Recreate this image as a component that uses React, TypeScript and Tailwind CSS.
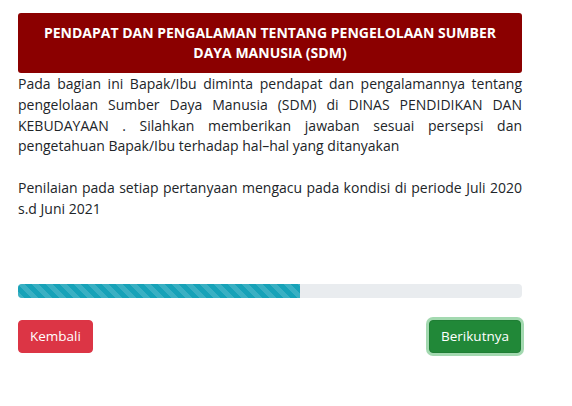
export default function App() {
  const progress = 56;
  return (
    <div className="min-h-[406px] w-[572px] bg-white font-['Open_Sans',sans-serif] text-[#212529]">
      <div className="ml-[18px] w-[504px] pt-[13px]">
        {/* Title */}
        <div className="rounded-[3px] bg-[#8b0000] px-4 py-[10px] text-center text-[14px] font-bold leading-[20px] text-white">
          PENDAPAT DAN PENGALAMAN TENTANG PENGELOLAAN SUMBER DAYA MANUSIA (SDM)
        </div>

        {/* Intro */}
        <p className="mt-[1px] text-justify text-[14px] leading-[20.8px]">
          Pada bagian ini Bapak/Ibu diminta pendapat dan pengalamannya tentang pengelolaan Sumber Daya Manusia (SDM) di
          DINAS PENDIDIKAN DAN KEBUDAYAAN . Silahkan memberikan jawaban sesuai persepsi dan pengetahuan Bapak/Ibu terhadap
          hal–hal yang ditanyakan
          <br />
          <br />
          Penilaian pada setiap pertanyaan mengacu pada kondisi di periode Juli 2020 s.d Juni 2021
        </p>

        {/* Progress */}
        <div className="mt-[64px] flex h-[14px] w-full overflow-hidden rounded-[4px] bg-[#e9ecef]">
          <div
            className="h-full bg-[#17a2b8] bg-[linear-gradient(45deg,rgba(255,255,255,.15)_25%,transparent_25%,transparent_50%,rgba(255,255,255,.15)_50%,rgba(255,255,255,.15)_75%,transparent_75%,transparent)] bg-[length:14px_14px]"
            style={{ width: `${progress}%` }}
          />
        </div>

        {/* Buttons */}
        <div className="mt-[22px] flex items-center justify-between">
          <button className="rounded-[4px] border border-[#dc3545] bg-[#dc3545] px-[11px] py-[5px] text-[13.5px] leading-[21px] text-white">
            Kembali
          </button>
          <button className="mr-[1px] rounded-[4px] border border-[#1e7e34] bg-[#218838] px-[11px] py-[5px] text-[13.5px] leading-[21px] text-white shadow-[0_0_0_3px_rgba(72,180,97,0.5)]">
            Berikutnya
          </button>
        </div>
      </div>
    </div>
  );
}
